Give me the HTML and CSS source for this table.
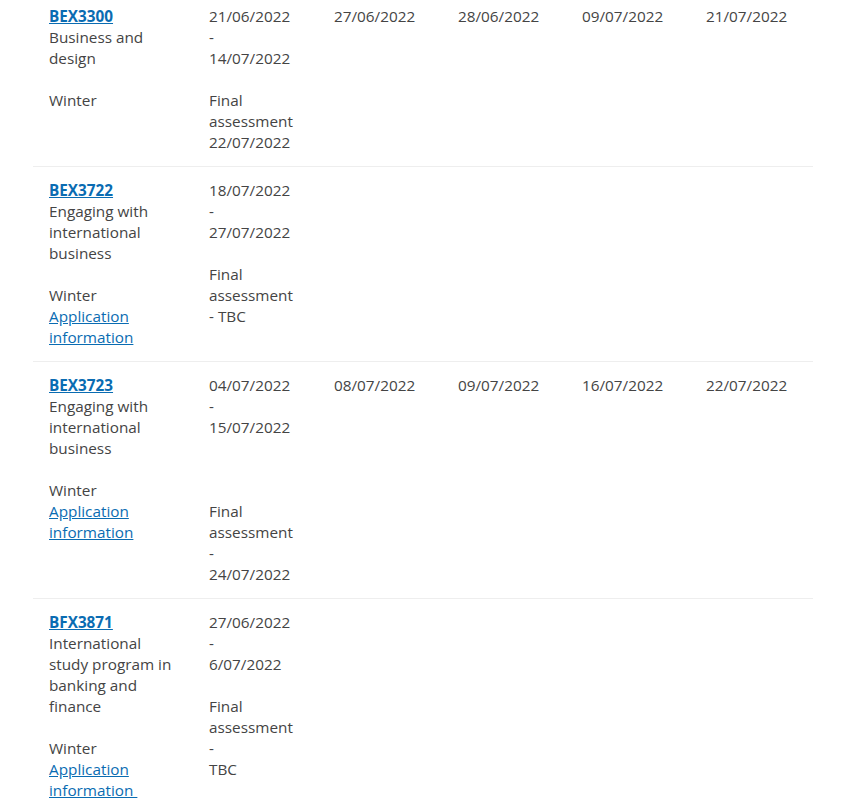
FILE: index.html
```html
<!DOCTYPE html>
<html lang="en">
<head>
<meta charset="utf-8">
<title>Unit dates</title>
<link rel="stylesheet" href="styles.css">
</head>
<body>
<div class="page">
<table class="schedule">
<colgroup>
<col class="c-unit"><col class="c-dates"><col class="c-d"><col class="c-d"><col class="c-d"><col class="c-last">
</colgroup>
<tbody>
<tr>
<td>
<p><a class="code" href="#">BEX3300</a><br>Business and design</p>
<p>Winter</p>
</td>
<td>
<p>21/06/2022<br>-<br>14/07/2022</p>
<p>Final<br>assessment<br>22/07/2022</p>
</td>
<td>27/06/2022</td>
<td>28/06/2022</td>
<td>09/07/2022</td>
<td>21/07/2022</td>
</tr>
<tr>
<td>
<p><a class="code" href="#">BEX3722</a><br>Engaging with international business</p>
<p>Winter<br><a href="#">Application information</a></p>
</td>
<td>
<p>18/07/2022<br>-<br>27/07/2022</p>
<p>Final<br>assessment<br>- TBC</p>
</td>
<td></td>
<td></td>
<td></td>
<td></td>
</tr>
<tr>
<td>
<p><a class="code" href="#">BEX3723</a><br>Engaging with international business</p>
<p>Winter<br><a href="#">Application information</a></p>
</td>
<td>
<p>04/07/2022<br>-<br>15/07/2022</p>
<p class="late">Final<br>assessment<br>-<br>24/07/2022</p>
</td>
<td>08/07/2022</td>
<td>09/07/2022</td>
<td>16/07/2022</td>
<td>22/07/2022</td>
</tr>
<tr>
<td>
<p><a class="code" href="#">BFX3871</a><br>International study program in banking and finance</p>
<p>Winter<br><a href="#">Application information&nbsp;</a></p>
</td>
<td>
<p>27/06/2022<br>-<br>6/07/2022</p>
<p>Final<br>assessment<br>-<br>TBC</p>
</td>
<td></td>
<td></td>
<td></td>
<td></td>
</tr>
</tbody>
</table>
</div>
</body>
</html>
```
FILE: styles.css
```css
html, body {
  margin: 0;
  padding: 0;
  background: #ffffff;
}

body {
  font-family: "Open Sans", "Noto Sans", "Liberation Sans", sans-serif;
  font-size: 15.3px;
  line-height: 21px;
  color: #444444;
}

.page {
  padding: 0 30px 0 33px;
}

.schedule {
  width: 780px;
  margin-top: -7px;
  border-collapse: collapse;
  table-layout: fixed;
}

.c-unit { width: 160px; }
.c-dates { width: 125px; }
.c-d { width: 124px; }
.c-last { width: 123px; }

.schedule td {
  vertical-align: top;
  padding: 13px 16px;
  border-bottom: 1px solid #eeeeee;
}

.schedule p {
  margin: 0 0 21px;
}

.schedule p:last-child {
  margin-bottom: 0;
}

.schedule p.late {
  margin-top: 63px;
}

.schedule a {
  color: #0a6cb2;
  text-decoration: underline;
}

.schedule a.code {
  font-weight: 700;
}
```
